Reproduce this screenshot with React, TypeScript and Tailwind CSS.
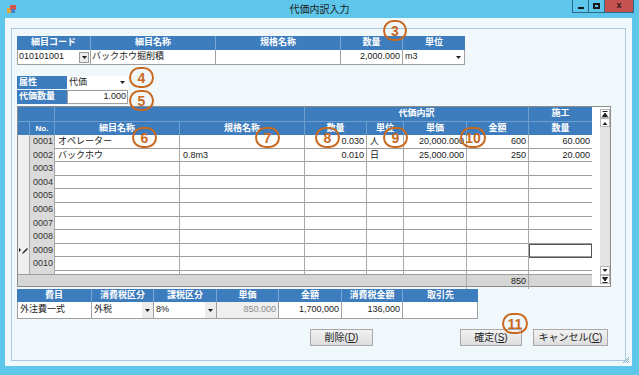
import React from "react";

const FONT = "font-['Liberation_Sans','Noto_Sans_CJK_JP',sans-serif]";
const GRID = "grid grid-cols-[12px_25px_125px_125px_62px_37px_63px_62px_63px]";
const HEAD = "bg-[#3d7cbd] text-white font-bold";

type Row = {
  no: string;
  name?: string;
  spec?: string;
  qty?: string;
  unit?: string;
  price?: string;
  amt?: string;
  work?: string;
};

const ROWS: Row[] = [
  { no: "0001", name: "オペレーター", qty: "0.030", unit: "人", price: "20,000.000", amt: "600", work: "60.000" },
  { no: "0002", name: "バックホウ", spec: "0.8m3", qty: "0.010", unit: "日", price: "25,000.000", amt: "250", work: "20.000" },
  { no: "0003" },
  { no: "0004" },
  { no: "0005" },
  { no: "0006" },
  { no: "0007" },
  { no: "0008" },
  { no: "0009" },
  { no: "0010" },
  { no: "0011" },
];

function Tri({ up = false }: { up?: boolean }) {
  return (
    <svg width="5" height="3" viewBox="0 0 5 3" className="block">
      <path d={up ? "M0 3h5L2.5 0z" : "M0 0h5L2.5 3z"} fill="#1e1e1e" />
    </svg>
  );
}

function Mark({ n, pos }: { n: string; pos: string }) {
  return (
    <span
      className={`absolute ${pos} flex h-[21px] items-center justify-center rounded-full border-2 border-[#c9691f] text-[14px] font-bold leading-none text-[#c9691f]`}
    >
      {n}
    </span>
  );
}

function Btn({ label, k, w }: { label: string; k: string; w: string }) {
  return (
    <div
      className={`${w} flex h-[17px] items-center justify-center border border-[#a9a9a9] bg-gradient-to-b from-[#f2f2f2] to-[#dddddd] text-[10px] text-[#222]`}
    >
      {label}(<span className="underline">{k}</span>)
    </div>
  );
}

function ScrollBtn({ kind }: { kind: "top" | "up" | "down" | "bottom" }) {
  return (
    <div className="flex h-[9px] items-center justify-center border border-[#b5b5b5] bg-white">
      <svg width="6" height="6" viewBox="0 0 6 6">
        {kind === "top" && <path d="M0.5 0.5h5M0.5 5.5h5L3 2z" stroke="#222" fill="#222" strokeWidth="1" />}
        {kind === "up" && <path d="M0.5 5h5L3 2z" fill="#222" />}
        {kind === "down" && <path d="M0.5 1h5L3 4z" fill="#222" />}
        {kind === "bottom" && <path d="M0.5 5.5h5M0.5 0.5h5L3 4z" stroke="#222" fill="#222" strokeWidth="1" />}
      </svg>
    </div>
  );
}

export default function App() {
  return (
    <div className={`${FONT} relative flex h-[375px] w-[639px] flex-col overflow-hidden bg-[#5ec6ea] text-[9px] text-[#1a1a1a]`}>
      {/* タイトルバー */}
      <div className="grid h-[18px] shrink-0 grid-cols-[1fr_auto_1fr]">
        <div className="flex items-center pl-[7px]">
          <svg width="9" height="9" viewBox="0 0 9 9">
            <rect x="0" y="3" width="6" height="5" fill="#e7a23a" />
            <rect x="3" y="0" width="6" height="5" fill="#d9534f" />
            <rect x="4" y="4" width="4" height="4" fill="#4a7fc1" />
          </svg>
        </div>
        <div className="flex items-center justify-center text-[10px] text-[#1c1c1c]">代価内訳入力</div>
        <div className="flex justify-end pr-[5px]">
          <div className="flex h-[13px] border border-t-0 border-[#2b6a88]">
            <div className="flex w-[16px] items-center justify-center border-r border-[#2b6a88]">
              <span className="mt-[3px] h-[2px] w-[6px] bg-[#1b1b1b]" />
            </div>
            <div className="flex w-[16px] items-center justify-center border-r border-[#2b6a88]">
              <span className="h-[6px] w-[7px] border-2 border-[#1b1b1b]" />
            </div>
            <div className="flex w-[28px] items-center justify-center bg-[#c75050] text-[9px] font-bold text-[#2a1a1a]">x</div>
          </div>
        </div>
      </div>

      {/* クライアント領域 */}
      <div className="mb-[9px] ml-[5px] mr-[7px] flex flex-1 flex-col bg-[#f1f8fc]">
        <div className="mb-[5px] ml-[6px] mr-[6px] mt-[10px] flex flex-1 flex-col border border-[#a6cbe2] pl-[5px] pt-[7px]">
          {/* 上段 */}
          <div className="flex w-[448px] flex-col">
            <div className={`flex h-[14px] ${HEAD}`}>
              <div className="flex w-[74px] items-center justify-center border-r border-[#7aa6d4]">細目コード</div>
              <div className="flex w-[125px] items-center justify-center border-r border-[#7aa6d4]">細目名称</div>
              <div className="flex w-[125px] items-center justify-center border-r border-[#7aa6d4]">規格名称</div>
              <div className="flex w-[62px] items-center justify-center border-r border-[#7aa6d4]">数量</div>
              <div className="flex w-[62px] items-center justify-center">単位</div>
            </div>
            <div className="flex h-[15px] border border-t-0 border-[#a0a0a0] bg-white">
              <div className="flex w-[73px] items-center justify-between border-r border-[#a0a0a0] pl-[1px] pr-[1px]">
                <span>010101001</span>
                <span className="flex h-[11px] w-[10px] items-center justify-center border border-[#9a9a9a] bg-[#ececec]">
                  <Tri />
                </span>
              </div>
              <div className="flex w-[125px] items-center border-r border-[#a0a0a0] pl-[1px]">バックホウ掘削積</div>
              <div className="w-[125px] border-r border-[#a0a0a0]" />
              <div className="flex w-[62px] items-center justify-end border-r border-[#a0a0a0] pr-[2px]">2,000.000</div>
              <div className="flex w-[61px] items-center justify-between pl-[2px] pr-[3px]">
                <span>m3</span>
                <Tri />
              </div>
            </div>
          </div>

          {/* 属性・代価数量 */}
          <div className="mt-[11px] flex w-[111px] flex-col gap-[1px]">
            <div className="flex h-[13px]">
              <div className={`flex w-[50px] items-center pl-[2px] ${HEAD}`}>属性</div>
              <div className="flex flex-1 items-center justify-between bg-white pl-[2px] pr-[3px]">
                <span>代価</span>
                <Tri />
              </div>
            </div>
            <div className="flex h-[14px]">
              <div className={`flex w-[50px] items-center pl-[2px] ${HEAD}`}>代価数量</div>
              <div className="flex flex-1 items-center justify-end border border-[#a0a0a0] bg-white pr-[1px]">1.000</div>
            </div>
          </div>

          {/* 明細グリッド */}
          <div className="mt-[2px] flex h-[181px] w-[594px] border border-[#8c8c8c] bg-white">
            <div className="flex w-[574px] flex-col">
              <div className={`${GRID} h-[14px] ${HEAD}`}>
                <div className="col-span-2 border-r border-[#6f9fd0]" />
                <div className="col-span-2 border-r border-[#6f9fd0]" />
                <div className="col-span-4 flex items-center justify-center border-r border-[#6f9fd0]">代価内訳</div>
                <div className="flex items-center justify-center">施工</div>
              </div>
              <div className={`${GRID} h-[14px] border-t border-[#6f9fd0] ${HEAD}`}>
                <div className="border-r border-[#6f9fd0]" />
                <div className="flex items-center justify-center border-r border-[#6f9fd0] text-[8px]">No.</div>
                <div className="flex items-center justify-center border-r border-[#6f9fd0]">細目名称</div>
                <div className="flex items-center justify-center border-r border-[#6f9fd0]">規格名称</div>
                <div className="flex items-center justify-center border-r border-[#6f9fd0]">数量</div>
                <div className="flex items-center justify-center border-r border-[#6f9fd0]">単位</div>
                <div className="flex items-center justify-center border-r border-[#6f9fd0]">単価</div>
                <div className="flex items-center justify-center border-r border-[#6f9fd0]">金額</div>
                <div className="flex items-center justify-center">数量</div>
              </div>
              <div className="h-[139px] overflow-hidden">
                {ROWS.map((r, i) => (
                  <div
                    key={r.no}
                    className={`${GRID} ${i % 5 === 1 || i % 5 === 3 ? "h-[13px]" : "h-[14px]"} border-b border-[#9c9c9c]`}
                  >
                    <div className="flex items-center justify-center border-r border-[#a8a8a8] bg-[#efefef]">
                      {r.no === "0009" && (
                        <svg width="9" height="8" viewBox="0 0 9 8">
                          <path d="M0 1v4l2-2z" fill="#111" />
                          <path d="M3 7l1-2 4-4 1 1-4 4z" fill="#222" />
                        </svg>
                      )}
                    </div>
                    <div className="flex items-center border-r border-[#a8a8a8] bg-[#dadada] pl-[3px] text-[#333]">{r.no}</div>
                    <div className="flex items-center border-r border-[#a8a8a8] pl-[3px]">{r.name}</div>
                    <div className="flex items-center border-r border-[#a8a8a8] pl-[3px]">{r.spec}</div>
                    <div className="flex items-center justify-end border-r border-[#a8a8a8] pr-[2px]">{r.qty}</div>
                    <div className="flex items-center border-r border-[#a8a8a8] pl-[3px]">{r.unit}</div>
                    <div className="flex items-center justify-end border-r border-[#a8a8a8] pr-[2px]">{r.price}</div>
                    <div className="flex items-center justify-end border-r border-[#a8a8a8] pr-[2px]">{r.amt}</div>
                    <div
                      className={`flex items-center justify-end pr-[2px] ${r.no === "0009" ? "outline outline-1 -outline-offset-1 outline-[#555]" : ""}`}
                    >
                      {r.work}
                    </div>
                  </div>
                ))}
              </div>
              <div className={`${GRID} h-[12px] border-t border-[#9c9c9c] bg-[#d6d6d6]`}>
                <div className="col-span-7 border-r border-[#a8a8a8]" />
                <div className="flex items-center justify-end border-r border-[#a8a8a8] pr-[2px]">850</div>
                <div />
              </div>
            </div>
            <div className="w-[8px]" />
            <div className="flex w-[10px] flex-col pb-[2px] pt-[2px]">
              <ScrollBtn kind="top" />
              <ScrollBtn kind="up" />
              <div className="flex-1 bg-[#e3e3e3]" />
              <ScrollBtn kind="down" />
              <ScrollBtn kind="bottom" />
            </div>
          </div>

          {/* 下段 */}
          <div className="mt-[2px] flex w-[461px] flex-col">
            <div className={`flex h-[13px] ${HEAD}`}>
              <div className="flex w-[75px] items-center justify-center border-r border-[#7aa6d4]">費目</div>
              <div className="flex w-[62px] items-center justify-center border-r border-[#7aa6d4]">消費税区分</div>
              <div className="flex w-[63px] items-center justify-center border-r border-[#7aa6d4]">課税区分</div>
              <div className="flex w-[62px] items-center justify-center border-r border-[#7aa6d4]">単価</div>
              <div className="flex w-[63px] items-center justify-center border-r border-[#7aa6d4]">金額</div>
              <div className="flex w-[61px] items-center justify-center border-r border-[#7aa6d4]">消費税金額</div>
              <div className="flex w-[75px] items-center justify-center">取引先</div>
            </div>
            <div className="flex h-[17px] border border-t-0 border-[#a0a0a0] bg-white">
              <div className="flex w-[74px] items-center border-r border-[#a0a0a0] pl-[2px]">外注費一式</div>
              <div className="flex w-[62px] items-center justify-between border-r border-[#a0a0a0] pl-[2px]">
                <span>外税</span>
                <span className="flex h-full w-[11px] items-center justify-center bg-[#ececec]">
                  <Tri />
                </span>
              </div>
              <div className="flex w-[63px] items-center justify-between border-r border-[#a0a0a0] pl-[2px]">
                <span>8%</span>
                <span className="flex h-full w-[11px] items-center justify-center bg-[#ececec]">
                  <Tri />
                </span>
              </div>
              <div className="flex w-[62px] items-center justify-end border-r border-[#a0a0a0] bg-[#efefef] pr-[2px] text-[#8a8a8a]">850.000</div>
              <div className="flex w-[63px] items-center justify-end border-r border-[#a0a0a0] pr-[2px]">1,700,000</div>
              <div className="flex w-[61px] items-center justify-end border-r border-[#a0a0a0] pr-[2px]">136,000</div>
              <div className="w-[74px]" />
            </div>
          </div>

          {/* ボタン */}
          <div className="mt-[10px] flex">
            <div className="ml-[293px]">
              <Btn label="削除" k="D" w="w-[63px]" />
            </div>
            <div className="ml-[87px]">
              <Btn label="確定" k="S" w="w-[62px]" />
            </div>
            <div className="ml-[11px]">
              <Btn label="キャンセル" k="C" w="w-[75px]" />
            </div>
          </div>
        </div>
      </div>

      {/* サイズ変更グリップ */}
      <svg className="absolute left-[622px] top-[356px]" width="8" height="8" viewBox="0 0 8 8">
        <path d="M7 1L1 7M7 3L3 7M7 5L5 7" stroke="#8fb4c8" strokeWidth="1" />
      </svg>

      {/* 注記番号 */}
      <Mark n="3" pos="left-[383px] top-[20px] w-[24px]" />
      <Mark n="4" pos="left-[129px] top-[67px] w-[25px]" />
      <Mark n="5" pos="left-[129px] top-[90px] w-[25px]" />
      <Mark n="6" pos="left-[132px] top-[127px] w-[25px]" />
      <Mark n="7" pos="left-[255px] top-[127px] w-[25px]" />
      <Mark n="8" pos="left-[315px] top-[127px] w-[25px]" />
      <Mark n="9" pos="left-[383px] top-[127px] w-[25px]" />
      <Mark n="10" pos="left-[460px] top-[127px] w-[26px]" />
      <Mark n="11" pos="left-[502px] top-[313px] w-[26px]" />
    </div>
  );
}
